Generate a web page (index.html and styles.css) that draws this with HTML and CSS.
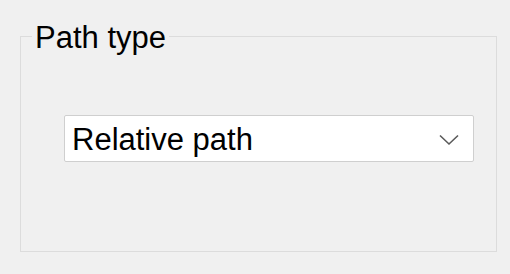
FILE: index.html
```html
<!DOCTYPE html>
<html lang="en">
<head>
  <meta charset="UTF-8">
  <title>Path type</title>
  <link rel="stylesheet" href="styles.css">
</head>
<body>
  <fieldset class="group-box">
    <legend>Path type</legend>
    <!-- path type dropdown -->
    <div class="combo">
      <span class="combo-text">Relative path</span>
      <svg class="combo-arrow" width="20" height="12" viewBox="0 0 20 12">
        <polyline points="1,1.5 10,10 19,1.5" fill="none" stroke="#5a5a5a" stroke-width="1.6"/>
      </svg>
    </div>
  </fieldset>
</body>
</html>
```

FILE: styles.css
```css
body {
  margin: 0;
  padding: 0;
  background-color: #f0f0f0;
  font-family: "Liberation Sans", Arial, sans-serif;
  color: #000;
}
.group-box {
  margin: 20px 0 0 20px;
  padding: 0 0 89px 11px;
  width: 464px;
  border: 1px solid #dcdcdc;
}
.group-box legend {
  padding: 2px 3px 0 3px;
  font-size: 31px;
  line-height: 31px;
}
.combo {
  margin: 62px 0 0 32px;
  width: 401px;
  height: 43px;
  background-color: #fff;
  border: 1px solid #cfcfcf;
  border-radius: 2px;
  display: flex;
  align-items: center;
  justify-content: space-between;
  padding: 2px 0 0 7px;
}
.combo-text {
  font-size: 31px;
}
.combo-arrow {
  margin-right: 14px;
}
```
